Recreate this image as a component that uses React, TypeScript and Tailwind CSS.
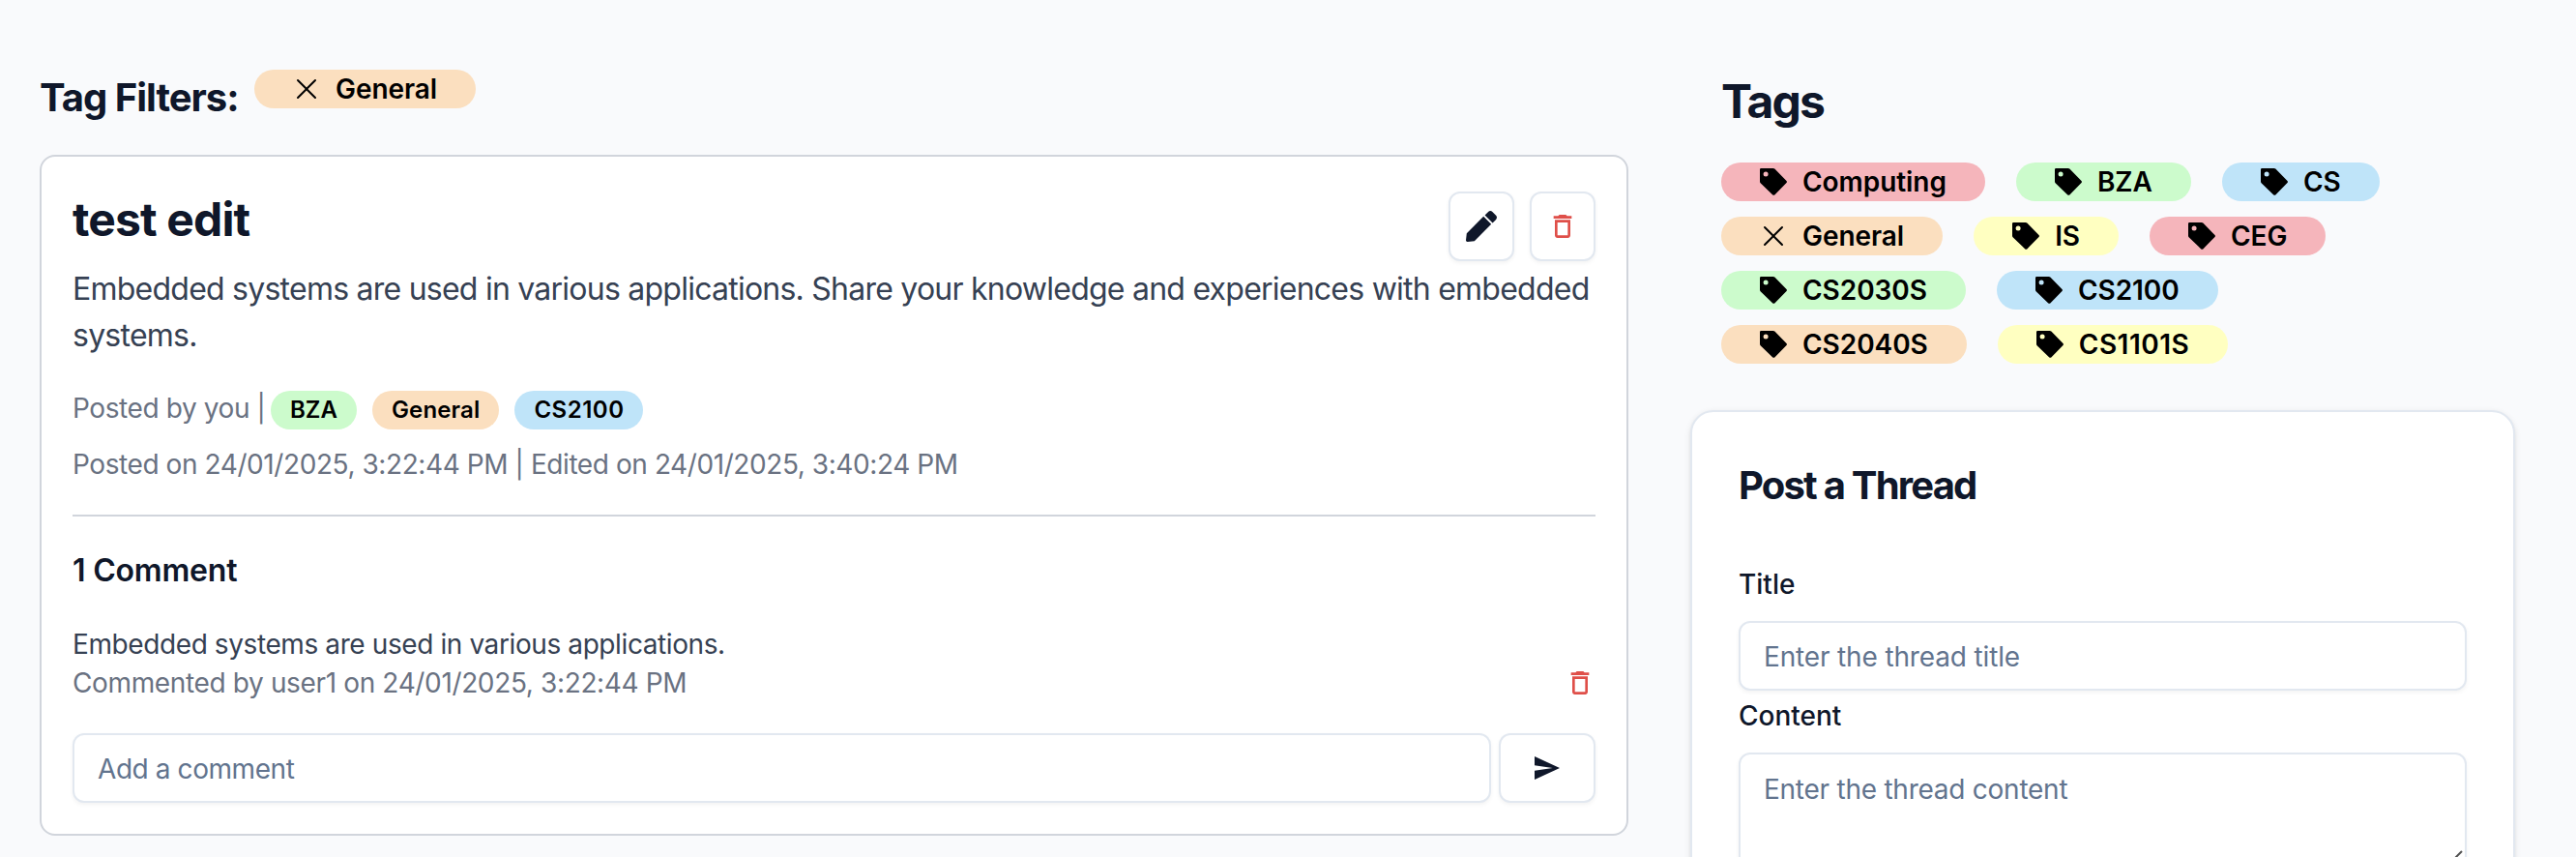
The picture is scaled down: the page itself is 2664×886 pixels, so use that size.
import { FaPen } from "react-icons/fa";
import { IoMdSend } from "react-icons/io";
import { MdDeleteOutline } from "react-icons/md";
import { PiX } from "react-icons/pi";

const COLORS = {
  red: "bg-[#f5b5bb]",
  green: "bg-[#ccfbcc]",
  blue: "bg-[#bfe4f9]",
  orange: "bg-[#fbdfbf]",
  yellow: "bg-[#ffffc1]",
};

type Color = keyof typeof COLORS;
type Tag = { name: string; color: Color; selected?: boolean; spacing?: string };

const TAG_ROWS: Tag[][] = [
  [
    { name: "Computing", color: "red" },
    { name: "BZA", color: "green" },
    { name: "CS", color: "blue" },
  ],
  [
    { name: "General", color: "orange", selected: true },
    { name: "IS", color: "yellow" },
    { name: "CEG", color: "red" },
  ],
  [
    { name: "CS2030S", color: "green" },
    { name: "CS2100", color: "blue" },
  ],
  [
    { name: "CS2040S", color: "orange" },
    { name: "CS1101S", color: "yellow", spacing: "tracking-[0.5px]" },
  ],
];

function TagIcon() {
  return (
    <svg width="28" height="28" viewBox="0 0 28 28" fill="currentColor" className="shrink-0">
      <path
        fillRule="evenodd"
        d="M1.2 0H13.8Q14.7 0 15.3.6L27.5 13Q28.4 14 27.5 15L15.3 27.4Q14.3 28.3 13.3 27.4L.6 15.2Q0 14.6 0 13.8V1.2Q0 0 1.2 0ZM6.1 3.6a2.5 2.5 0 1 0 0 5a2.5 2.5 0 1 0 0-5Z"
      />
    </svg>
  );
}

function TagButton({ name, color, selected, spacing = "tracking-[-0.05px]" }: Tag) {
  return (
    <button
      className={`flex h-10 items-center rounded-full px-10 text-[28px] leading-10 font-semibold text-black ${spacing} ${COLORS[color]}`}
    >
      {selected ? <PiX size={32} className="-mx-0.5 shrink-0" /> : <TagIcon />}
      <span className="ml-4">{name}</span>
    </button>
  );
}

function Badge({ name, color, spacing = "tracking-normal" }: Tag) {
  return (
    <span
      className={`flex h-10 items-center rounded-full px-5 text-2xl leading-8 font-semibold text-black ${spacing} ${COLORS[color]}`}
    >
      {name}
    </span>
  );
}

const FIELD =
  "rounded-[12px] border-2 border-slate-200 bg-white shadow-[0_2px_4px_rgba(0,0,0,0.05)]";

export default function App() {
  return (
    <div className="flex h-[886px] w-[2664px] items-start overflow-hidden bg-[#f9fafc] pt-[72px] pl-[41px] font-['Inter',sans-serif] text-[#0f172a] antialiased">
      <main className="w-[1643px] shrink-0">
        <div className="mb-8 flex h-14 items-start">
          <h2 className="w-[222px] text-[40px] leading-[57px] font-bold tracking-[-1px] whitespace-nowrap">
            Tag Filters:
          </h2>
          <TagButton name="General" color="orange" selected />
        </div>

        <article className="h-[704px] rounded-[16px] border-2 border-gray-300 bg-white p-8">
          <div className="flex h-20 items-start justify-between">
            <h1 className="text-5xl leading-[66px] font-bold tracking-[-0.85px]">test edit</h1>
            <div className="mt-1 flex gap-4">
              <button className={`flex h-[72px] w-[68px] items-center justify-center ${FIELD}`}>
                <FaPen size={32} />
              </button>
              <button className={`flex h-[72px] w-[68px] items-center justify-center text-[#df4f49] ${FIELD}`}>
                <MdDeleteOutline size={32} />
              </button>
            </div>
          </div>
          <p className="h-24 pt-px text-[32px] leading-12 tracking-[-0.76px] text-gray-700">
            Embedded systems are used in various applications. Share your knowledge and experiences with embedded
            systems.
          </p>
          <div className="mt-8 flex h-[44px] items-start text-[28px] leading-10 text-gray-500">
            <span className="w-[205px] tracking-[-0.4px] whitespace-nowrap">Posted by you |</span>
            <div className="mt-0.5 flex gap-4">
              <Badge name="BZA" color="green" />
              <Badge name="General" color="orange" spacing="tracking-[0.15px]" />
              <Badge name="CS2100" color="blue" spacing="tracking-[0.5px]" />
            </div>
          </div>
          <p className="mt-3.5 text-[28px] leading-10 tracking-[-0.42px] text-gray-500">
            Posted on 24/01/2025, 3:22:44 PM | Edited on 24/01/2025, 3:40:24 PM
          </p>
          <hr className="mt-8 border-t-2 border-gray-300" />
          <h3 className="mt-8 text-[32px] leading-12 font-semibold tracking-[-0.2px]">1 Comment</h3>
          <div className="mt-8 text-[28px] leading-10 tracking-[-0.4px]">
            <p className="text-gray-700">Embedded systems are used in various applications.</p>
            <div className="flex items-center justify-between">
              <p className="tracking-[-0.36px] text-gray-500">Commented by user1 on 24/01/2025, 3:22:44 PM</p>
              <MdDeleteOutline size={32} className="text-[#df4f49]" />
            </div>
          </div>
          <div className="mt-8 flex gap-2">
            <div
              className={`flex h-[72px] grow items-center px-6 pt-0.5 text-[28px] leading-10 tracking-[-0.42px] text-slate-500 ${FIELD}`}
            >
              Add a comment
            </div>
            <button className={`flex h-[72px] w-[100px] items-center justify-center ${FIELD}`}>
              <IoMdSend size={32} />
            </button>
          </div>
        </article>
      </main>

      <aside className="ml-16 w-[853px] shrink-0">
        <section className="pl-8">
          <h1 className="mb-8 h-16 text-5xl leading-[66px] font-bold tracking-[-1.9px]">Tags</h1>
          <div className="flex flex-col gap-4">
            {TAG_ROWS.map((row) => (
              <div key={row[0].name} className="flex gap-8">
                {row.map((tag) => (
                  <TagButton key={tag.name} {...tag} />
                ))}
              </div>
            ))}
          </div>
        </section>

        <section className="mt-12 h-[560px] rounded-[24px] border-2 border-slate-200 bg-white p-12 shadow-[0_2px_6px_rgba(0,0,0,0.1),0_2px_4px_-2px_rgba(0,0,0,0.1)]">
          <h2 className="mb-12 text-[40px] leading-14 font-bold tracking-[-1.8px]">Post a Thread</h2>
          <label className="mb-[11px] block text-[28px] leading-[53px] font-medium">Title</label>
          <div
            className={`flex h-[72px] items-center px-6 pt-0.5 text-[28px] leading-10 tracking-[-0.15px] text-slate-500 ${FIELD}`}
          >
            Enter the thread title
          </div>
          <label className="mb-[11px] block text-[28px] leading-[53px] font-medium">Content</label>
          <div className={`relative h-[120px] px-6 py-4 text-[28px] leading-10 tracking-[-0.25px] text-slate-500 ${FIELD}`}>
            Enter the thread content
            <svg
              width="20"
              height="20"
              viewBox="0 0 20 20"
              className="absolute right-0 bottom-0 text-neutral-600"
              stroke="currentColor"
              strokeWidth="2"
            >
              <path d="M2 19 17 4M10 19l7-7" />
            </svg>
          </div>
        </section>
      </aside>
    </div>
  );
}
